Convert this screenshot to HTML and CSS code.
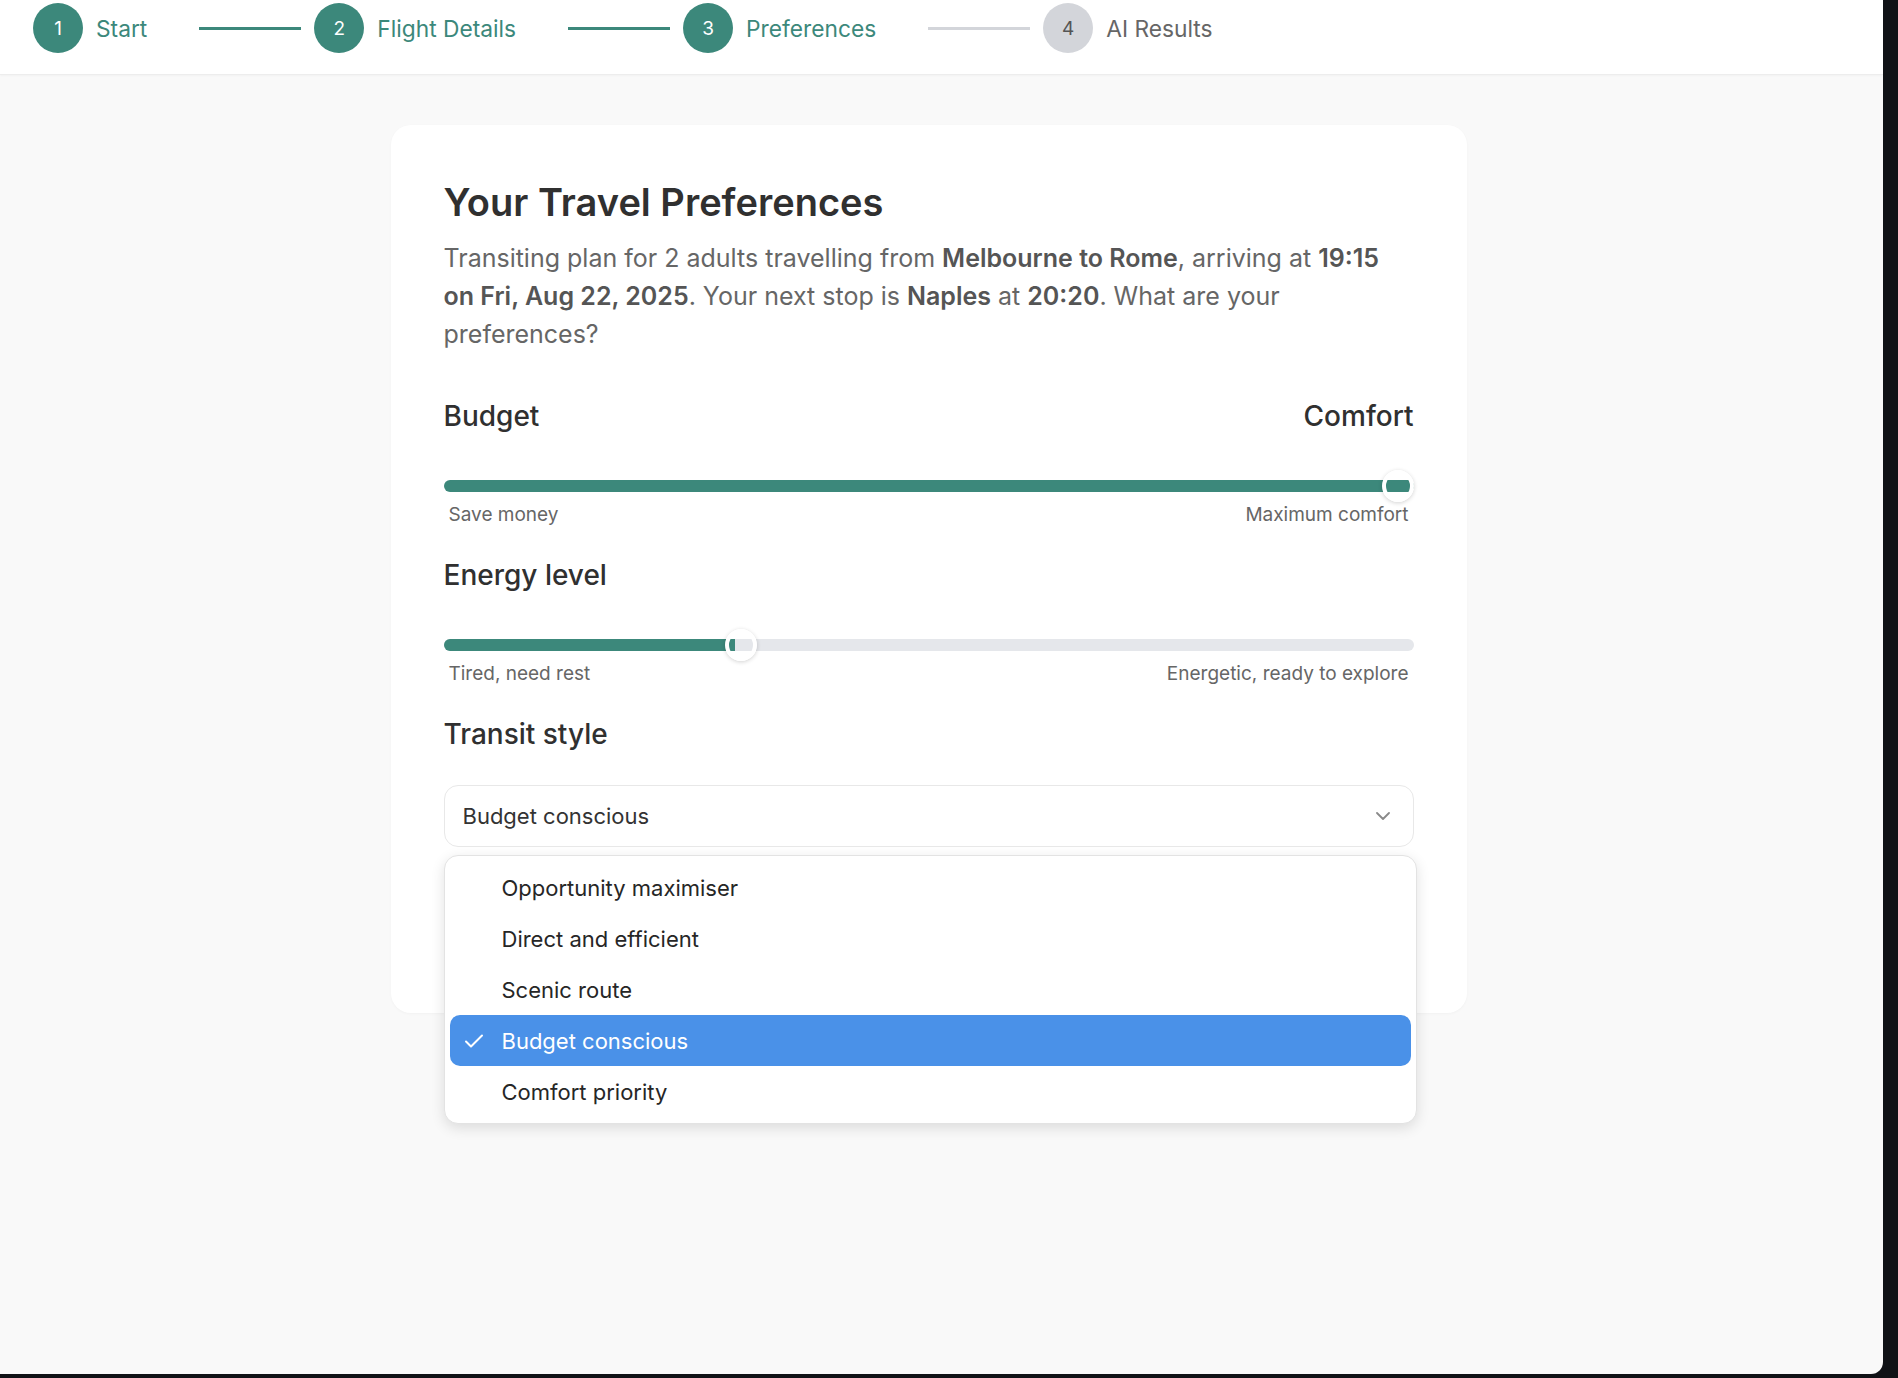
FILE: index.html
```html
<!DOCTYPE html>
<html lang="en">
<head>
<meta charset="utf-8">
<title>Your Travel Preferences</title>
<link rel="stylesheet" href="styles.css">
</head>
<body>
<div class="app">
  <header class="stepper">
    <div class="step is-done"><span class="step-num">1</span><span class="step-label">Start</span></div>
    <span class="step-line is-done"></span>
    <div class="step is-done"><span class="step-num">2</span><span class="step-label">Flight Details</span></div>
    <span class="step-line is-done"></span>
    <div class="step is-done"><span class="step-num">3</span><span class="step-label">Preferences</span></div>
    <span class="step-line"></span>
    <div class="step"><span class="step-num">4</span><span class="step-label">AI Results</span></div>
  </header>

  <main class="main">
    <section class="card">
      <h1 class="card-title">Your Travel Preferences</h1>
      <p class="card-intro">Transiting plan for 2 adults travelling from <strong>Melbourne to Rome</strong>, arriving at <strong>19:15 on Fri, Aug 22, 2025</strong>. Your next stop is <strong>Naples</strong> at <strong>20:20</strong>. What are your preferences?</p>

      <div class="pref pref-first">
        <div class="pref-head"><span>Budget</span><span>Comfort</span></div>
        <div class="slider" style="--p:1">
          <div class="slider-track"><div class="slider-fill"></div></div>
          <div class="slider-thumb"></div>
        </div>
        <div class="slider-labels"><span>Save money</span><span>Maximum comfort</span></div>
      </div>

      <div class="pref">
        <div class="pref-head"><span>Energy level</span></div>
        <div class="slider" style="--p:0.3">
          <div class="slider-track"><div class="slider-fill"></div></div>
          <div class="slider-thumb"></div>
        </div>
        <div class="slider-labels"><span>Tired, need rest</span><span>Energetic, ready to explore</span></div>
      </div>

      <div class="pref">
        <div class="pref-head"><span>Transit style</span></div>
        <div class="select-wrap">
          <div class="select">
            <span>Budget conscious</span>
            <svg class="select-chevron" width="14" height="8" viewBox="0 0 14 8"><polyline points="1,1 7,7 13,1" fill="none" stroke="#8a8a8a" stroke-width="1.8" stroke-linecap="round" stroke-linejoin="round"/></svg>
          </div>
          <ul class="menu">
            <li class="menu-item">Opportunity maximiser</li>
            <li class="menu-item">Direct and efficient</li>
            <li class="menu-item">Scenic route</li>
            <li class="menu-item is-selected">
              <svg class="menu-check" width="20" height="16" viewBox="0 0 20 16"><polyline points="2,8.5 7,13.5 18,2.5" fill="none" stroke="#ffffff" stroke-width="2" stroke-linecap="round" stroke-linejoin="round"/></svg>
              Budget conscious
            </li>
            <li class="menu-item">Comfort priority</li>
          </ul>
        </div>
      </div>
      <div class="card-actions"></div>
    </section>
  </main>
</div>
</body>
</html>
```

FILE: styles.css
```css
* { box-sizing: border-box; }

html, body {
  margin: 0;
  padding: 0;
  background: #101216;
}

body {
  font-family: Inter, "Noto Sans", "Liberation Sans", sans-serif;
  color: #333;
}

.app {
  width: 1883px;
  height: 1374px;
  background: #f9f9f9;
  border-bottom-right-radius: 12px;
  overflow: hidden;
}

/* ---------- stepper ---------- */
.stepper {
  height: 75px;
  background: #ffffff;
  border-bottom: 1px solid #ededed;
  box-shadow: 0 1px 2px rgba(0, 0, 0, 0.03);
  display: flex;
  align-items: flex-start;
  padding: 3px 0 0 33px;
}

.step {
  display: flex;
  align-items: center;
  gap: 13px;
  height: 50px;
}

.step-num {
  width: 50px;
  height: 50px;
  border-radius: 50%;
  background: #d3d5da;
  color: #555;
  font-size: 19px;
  display: flex;
  align-items: center;
  justify-content: center;
}

.step-label {
  font-size: 22.75px;
  color: #666;
}

.step.is-done .step-num {
  background: #3c887b;
  color: #ffffff;
}

.step.is-done .step-label {
  color: #3c887b;
}

.step-line {
  width: 102px;
  height: 3px;
  margin: 24px 13px 0 52px;
  background: #d3d5da;
}

.step-line.is-done {
  background: #3c887b;
}

/* ---------- main ---------- */
.main {
  display: flex;
  justify-content: center;
  padding: 50px 26px 0 0;
}

.card {
  width: 1076px;
  background: #ffffff;
  border-radius: 20px;
  box-shadow: 0 1px 3px rgba(0, 0, 0, 0.03);
  padding: 54px 53px 54px 53px;
}

.card-title {
  margin: 0 0 14px;
  font-size: 38px;
  line-height: 46px;
  font-weight: 600;
  color: #303030;
}

.card-intro {
  margin: 0;
  font-size: 25px;
  line-height: 38px;
  color: #666;
}

.card-intro strong {
  font-weight: 600;
  color: #555;
}

.pref { margin-top: 32px; }
.pref-first { margin-top: 46px; }

.pref-head {
  display: flex;
  justify-content: space-between;
  font-size: 28px;
  line-height: 34px;
  font-weight: 500;
  color: #303030;
}

/* ---------- slider ---------- */
.slider {
  position: relative;
  height: 32px;
  margin-top: 37px;
  display: flex;
  align-items: center;
}

.slider-track {
  width: 100%;
  height: 12px;
  border-radius: 6px;
  background: #e5e7eb;
  overflow: hidden;
}

.slider-fill {
  height: 100%;
  width: calc(var(--p) * 100%);
  background: #3c887b;
}

.slider-thumb {
  position: absolute;
  top: 0;
  left: calc(16px + (100% - 32px) * var(--p));
  width: 32px;
  height: 32px;
  margin-left: -16px;
  border-radius: 50%;
  border: 4px solid #ffffff;
  background: transparent;
  box-shadow: 0 1px 4px rgba(0, 0, 0, 0.18);
}

.slider-labels {
  display: flex;
  justify-content: space-between;
  margin-top: 2px;
  padding: 0 5px;
  font-size: 19px;
  line-height: 22px;
  color: #666;
}

/* ---------- select ---------- */
.select-wrap {
  position: relative;
  margin-top: 34px;
}

.select {
  height: 62px;
  border: 1px solid #e8e8e8;
  border-radius: 14px;
  background: #ffffff;
  display: flex;
  align-items: center;
  justify-content: space-between;
  padding: 0 23px 0 18px;
  font-size: 22px;
  color: #333;
}

.menu {
  position: absolute;
  top: calc(100% + 8px);
  left: 0;
  width: calc(100% + 3px);
  margin: 0;
  padding: 6px 5px;
  list-style: none;
  background: #ffffff;
  border: 1px solid #e3e3e3;
  border-radius: 14px;
  box-shadow: 0 4px 14px rgba(0, 0, 0, 0.12);
  z-index: 5;
}

.menu-item {
  position: relative;
  height: 51px;
  display: flex;
  align-items: center;
  padding-left: 52px;
  border-radius: 10px;
  font-size: 22px;
  color: #262626;
}

.menu-item.is-selected {
  background: #4a91e8;
  color: #ffffff;
}

.menu-check {
  position: absolute;
  left: 14px;
  top: 18px;
}

.card-actions {
  height: 112px;
}
```
